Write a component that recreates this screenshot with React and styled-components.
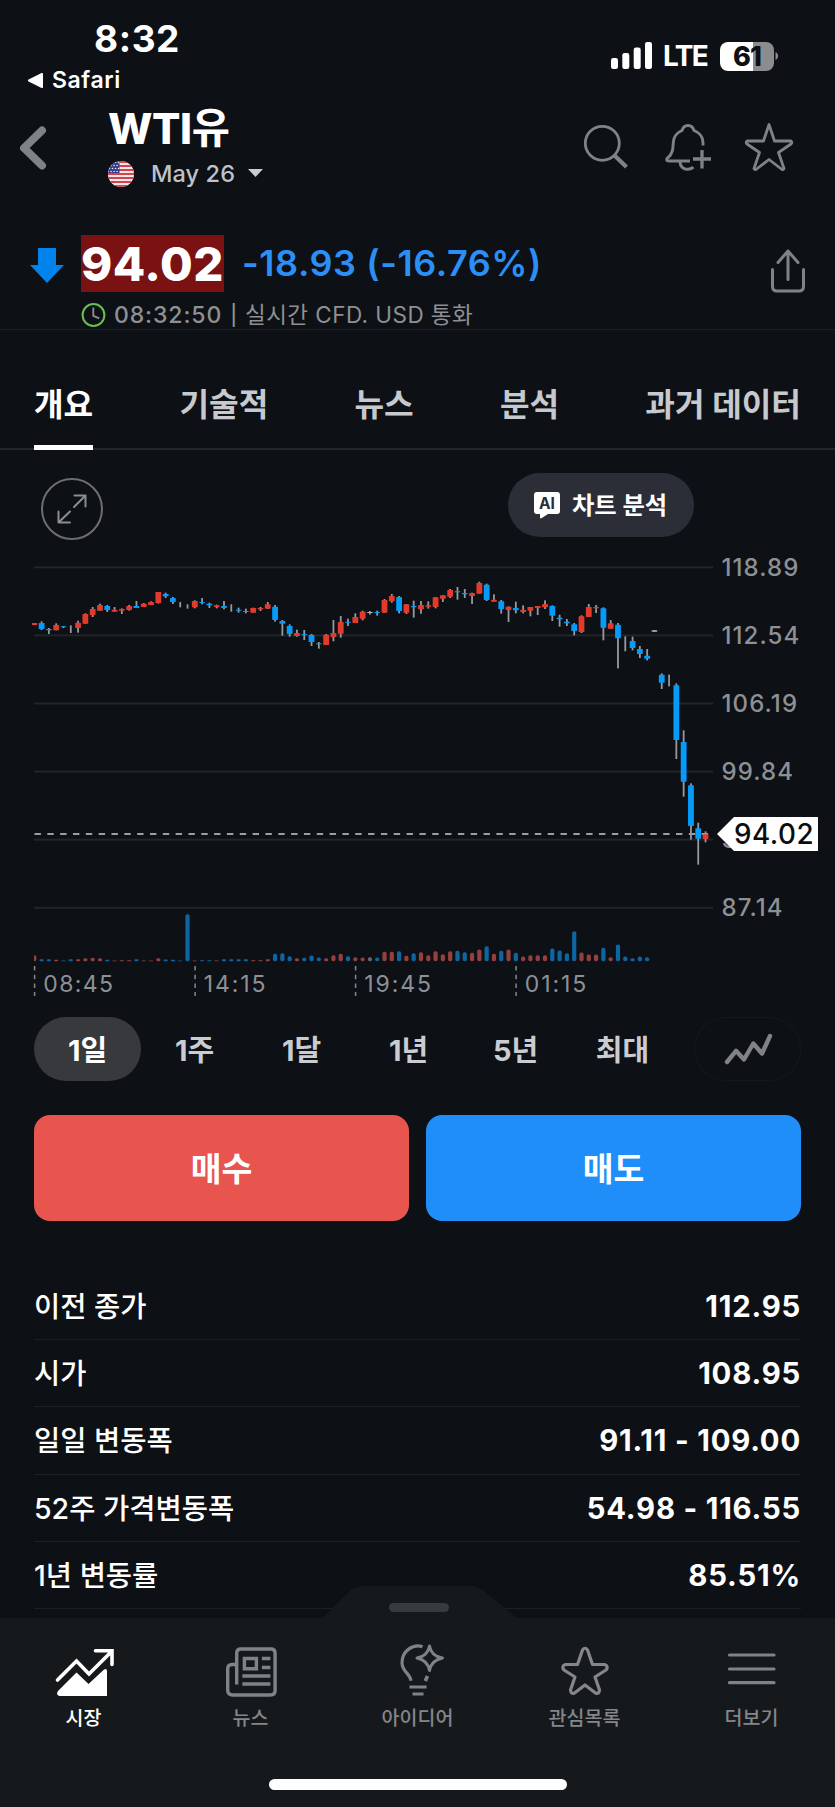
import React from "react";
import styled, { createGlobalStyle } from "styled-components";

const GlobalStyle = createGlobalStyle`
  * { box-sizing: border-box; }
  body {
    margin: 0;
    background: #0d1015;
    color: #fff;
    font-family: Inter, "Noto Sans CJK KR", sans-serif;
  }
  svg { display: block; flex: none; overflow: visible; }
  button {
    font: inherit;
    color: inherit;
    background: none;
    border: 0;
    padding: 0;
  }
`;

const Screen = styled.div`
  width: 835px;
  height: 1807px;
  display: flex;
  flex-direction: column;
  overflow: hidden;
  background: #0d1015;
`;

const Label = styled.span`
  display: block;
  white-space: pre;
  font-size: ${(p) => p.$size}px;
  font-weight: ${(p) => p.$weight || 400};
  letter-spacing: ${(p) => p.$track || 0}px;
  color: ${(p) => p.$color || "inherit"};
`;

/* Status bar */
const StatusBar = styled.header`
  height: 94px;
  flex: none;
  display: flex;
  justify-content: space-between;
  padding: 20px 56px 0 27px;
`;
const StatusLeft = styled.div`
  display: flex;
  flex-direction: column;
`;
const Clock = styled.div`
  line-height: 37px;
  padding-left: 67px;
`;
const BackToApp = styled.div`
  display: flex;
  align-items: center;
  gap: 8px;
  margin-top: 8px;
  line-height: 30px;
`;
const StatusRight = styled.div`
  display: flex;
  align-items: center;
  height: 72px;
  line-height: 30px;
`;
const Carrier = styled.div`
  width: 67px;
  padding-left: 10px;
`;
const Battery = styled.div`
  width: 54px;
  height: 29px;
  border-radius: 8px;
  background: linear-gradient(90deg, #fff 61%, #8b8c8e 61%);
  text-align: center;
  line-height: 29px;
  color: #0d1015;
`;

/* Title bar */
const TitleBar = styled.div`
  height: 117px;
  flex: none;
  display: flex;
  padding-left: 19px;
  padding-right: 41px;
`;
const TitleBlock = styled.div`
  display: flex;
  flex-direction: column;
  padding: 12px 0 0 61px;
  flex: 1;
`;
const TitleLine = styled.div`
  display: flex;
  line-height: 45px;
`;
const Contract = styled.div`
  display: flex;
  align-items: center;
  margin-top: 7px;
  line-height: 31px;
`;
const ContractName = styled.div`
  width: 97px;
  margin: 0 0 0 17px;
`;
const TitleActions = styled.div`
  display: flex;
  gap: 32px;
  padding-top: 28px;
`;
const BackButton = styled.button`
  align-self: flex-start;
  margin-top: 31px;
`;

/* Quote */
const Quote = styled.section`
  height: 119px;
  flex: none;
  display: flex;
  padding: 24px 29px 0 30px;
  border-bottom: 1px solid #1c1f24;
`;
const QuoteBody = styled.div`
  flex: 1;
  padding-left: 17px;
`;
const QuoteLine = styled.div`
  display: flex;
  align-items: center;
  line-height: 57px;
  height: 57px;
`;
const Price = styled.div`
  width: 143px;
  flex: none;
  background: #7a1113;
  text-align: center;
  margin-right: 18px;
`;
const QuoteMeta = styled.div`
  display: flex;
  align-items: center;
  gap: 8px;
  margin-top: 9px;
  line-height: 28px;
`;
const ShareButton = styled.button`
  align-self: flex-start;
  margin-top: 13px;
`;

/* Tabs */
const Tabs = styled.nav`
  height: 120px;
  flex: none;
  display: flex;
  justify-content: space-between;
  padding: 0 34px;
  border-bottom: 2px solid #222529;
`;
const Tab = styled.div`
  height: 120px;
  padding-top: 51px;
  line-height: 47px;
  color: ${(p) => (p.$active ? "#fff" : "#c6c9ce")};
  border-bottom: 5px solid ${(p) => (p.$active ? "#fff" : "transparent")};
`;

/* Chart */
const ChartTools = styled.div`
  height: 100px;
  flex: none;
  display: flex;
  justify-content: space-between;
  align-items: flex-start;
  padding: 23px 141px 0 41px;
`;
const ExpandButton = styled.button`
  width: 62px;
  height: 62px;
  margin-top: 5px;
  border: 2px solid #6c6e71;
  border-radius: 50%;
  display: grid;
  place-items: center;
`;
const AnalysisButton = styled.button`
  width: 186px;
  height: 64px;
  border-radius: 32px;
  background: #2c2e37;
  display: flex;
  align-items: center;
  padding-left: 26px;
  gap: 12px;
  line-height: 62px;
`;
const ChartText = styled.text`
  font-family: Inter, sans-serif;
  font-size: ${(p) => p.$size || 24}px;
  font-weight: ${(p) => p.$weight || 500};
  letter-spacing: ${(p) => p.$track || 0}px;
  fill: ${(p) => p.$fill || "#8d9094"};
`;

/* Periods */
const Periods = styled.div`
  display: flex;
  flex: none;
  margin: 14px 34px 0;
`;
const Period = styled.button`
  width: 107px;
  height: 64px;
  padding-top: ${(p) => (p.$outlined ? 0 : 3)}px;
  margin-left: ${(p) => (p.$outlined ? "auto" : 0)};
  display: flex;
  justify-content: center;
  align-items: center;
  border-radius: 32px;
  line-height: 61px;
  color: ${(p) => (p.$active ? "#fff" : "#c9ccd1")};
  background: ${(p) => (p.$active ? "#38393d" : "transparent")};
  box-shadow: inset 0 0 0 1px ${(p) => (p.$outlined ? "#15191d" : "transparent")};
`;

/* Trade buttons */
const TradeRow = styled.div`
  display: flex;
  flex: none;
  gap: 17px;
  margin: 34px 34px 0;
`;
const TradeButton = styled.button`
  flex: 1;
  height: 106px;
  border-radius: 16px;
  background: ${(p) => p.$bg};
  line-height: 104px;
  padding-top: 2px;
`;

/* Statistics */
const Stats = styled.dl`
  margin: 52px 34px 0;
  height: 345px;
  flex: none;
  overflow: hidden;
`;
const StatRow = styled.div`
  height: 67.2px;
  display: flex;
  justify-content: space-between;
  line-height: 67px;
  border-bottom: 1px solid #1c1f23;
  dt, dd { margin: 0; }
`;

/* Bottom navigation */
const BottomNav = styled.footer`
  position: relative;
  height: 189px;
  flex: none;
  background: #16191c;
`;
const SheetHandle = styled.svg`
  position: absolute;
  left: 322px;
  top: -32px;
`;
const NavItems = styled.div`
  display: flex;
`;
const NavItem = styled.div`
  flex: 1;
  display: flex;
  flex-direction: column;
  align-items: center;
  padding-top: 27px;
  color: ${(p) => (p.$active ? "#fff" : "#84868a")};
  line-height: 30px;
`;
const NavGlyph = styled.div`
  height: 58px;
`;
const HomeIndicator = styled.div`
  width: 298px;
  height: 11px;
  border-radius: 6px;
  background: #fff;
  margin: 46px auto 0;
`;

const GREY = "#808386";

const TriangleLeft = () => (
  <svg width="17" height="17" viewBox="0 0 17 17">
    <path d="M15 2 2 8.500 15 15Z" fill="#fff" stroke="#fff" strokeWidth="2" strokeLinejoin="round" />
  </svg>
);

const Signal = () => (
  <svg width="42" height="28" viewBox="0 0 42 28" fill="#fff">
    <rect x="0" y="16" width="7" height="11" rx="2.200" />
    <rect x="11.300" y="11" width="7" height="16" rx="2.200" />
    <rect x="22.700" y="5.500" width="7" height="21.500" rx="2.200" />
    <rect x="34" y="0" width="7" height="27" rx="2.200" />
  </svg>
);

const BatteryCap = () => (
  <svg width="5" height="10" viewBox="0 0 5 10">
    <path d="M1.500 1C5 2.500 5 7.500 1.500 9Z" fill="#8b8c8e" />
  </svg>
);

const ChevronBack = () => (
  <svg width="28" height="46" viewBox="0 0 28 46" fill="none">
    <path d="M23 5.500 5 23 23 40.500" stroke={GREY} strokeWidth="8" strokeLinecap="round" strokeLinejoin="round" />
  </svg>
);

const UsFlag = () => (
  <svg width="26" height="26" viewBox="0 0 26 26">
    <defs>
      <clipPath id="flag-round"><circle cx="13" cy="13" r="13" /></clipPath>
    </defs>
    <g clipPath="url(#flag-round)">
      <rect width="26" height="26" fill="#f6e6e8" />
      {[0, 1, 2, 3, 4, 5, 6].map((i) => (
        <rect key={i} y={i * 4} width="26" height="2" fill="#d3424f" />
      ))}
      <rect width="11.500" height="12" fill="#343c86" />
      {[2, 5, 8, 11].map((y, r) =>
        [1.5, 4.5, 7.5, 10.5].map((x) => (
          <circle key={`${x}-${y}`} cx={x - (r % 2) * 1.4} cy={y - 0.5} r="0.800" fill="#e9e9f4" />
        ))
      )}
    </g>
  </svg>
);

const CaretDown = () => (
  <svg width="15" height="8" viewBox="0 0 15 8">
    <path d="M0 0H15L7.500 8Z" fill="#c9ccd1" transform="translate(0 -1)" />
  </svg>
);

const SearchIcon = () => (
  <svg width="48" height="52" viewBox="0 0 48 52" fill="none" stroke={GREY}>
    <circle cx="17.300" cy="21.300" r="17" strokeWidth="2.800" />
    <path d="M29.500 33.500 41.500 45" strokeWidth="4.200" />
  </svg>
);

const BellPlusIcon = () => (
  <svg width="48" height="52" viewBox="0 0 48 52" fill="none" stroke={GREY} strokeWidth="2.900" strokeLinecap="butt">
    <path d="M25 39H4.500C1 39 1 37 3 35.500C8 31.500 8 26 8.300 20.500C8.600 14.500 12 10.500 17 8.500C18 4.800 20 3.500 23 3.500C26 3.500 28 4.800 29 8.500C34.500 10.500 37.800 14.500 38 20.500V23.500" strokeLinejoin="round" />
    <path d="M15 40C15 44.500 18.500 47.300 22.500 47.200C25 47.200 27 46.500 28.300 45" />
    <path d="M37 28V46.500M28 37H46" strokeWidth="3.300" />
  </svg>
);

const StarIcon = ({ size, path, width }) => (
  <svg width={size} height="52" viewBox={`0 0 ${size} 52`} fill="none">
    <path d={path} stroke="currentColor" strokeWidth={width} strokeLinejoin="round" />
  </svg>
);

const DownArrow = () => (
  <svg width="34" height="58" viewBox="0 0 34 58">
    <path d="M8 13H26V30H34L17 48 0 30H8Z" fill="#0183eb" />
  </svg>
);

const ClockIcon = () => (
  <svg width="25" height="24" viewBox="0 0 25 24" fill="none">
    <circle cx="12.500" cy="12" r="10.900" stroke="#69bf51" strokeWidth="2" />
    <path d="M12.300 4.500V12.800L18.300 15.300" stroke="#8e9093" strokeWidth="1.800" />
  </svg>
);

const ShareIcon = () => (
  <svg width="36" height="46" viewBox="0 0 36 46" fill="none" stroke={GREY} strokeWidth="3" strokeLinecap="round" strokeLinejoin="round">
    <path d="M18 31.500V3M8 14.500 18 3 28 14.500" />
    <path d="M2.500 21.500V38.500C2.500 41.500 4 43 7 43H29C32 43 33.500 41.500 33.500 38.500V21.500" />
  </svg>
);

const ExpandIcon = () => (
  <svg width="30" height="30" viewBox="0 0 30 30" fill="none" stroke="#8b8d90" strokeWidth="2" strokeLinecap="round" strokeLinejoin="round">
    <path d="M17 13 28.500 1.500M17.500 1.500H28.500V12.500" />
    <path d="M13 17.500 1.500 28.500M1.500 17.500V28.500H13" />
  </svg>
);

const AiIconBox = styled.span`
  position: relative;
  width: 26px;
  height: 27px;
  display: block;
`;
const AiText = styled.span`
  position: absolute;
  left: 0;
  top: 0;
  width: 26px;
  text-align: center;
  font-size: 15.5px;
  line-height: 23px;
  font-weight: 700;
  color: #2c2e37;
`;
const AiIcon = () => (
  <AiIconBox>
    <svg width="26" height="27" viewBox="0 0 26 27">
      <path d="M3 0H23Q26 0 26 3V19Q26 22 23 22H14L7 26.500Q6 26.500 6 25V22H3Q0 22 0 19V3Q0 0 3 0Z" fill="#fff" />
    </svg>
    <AiText>AI</AiText>
  </AiIconBox>
);

const ZigzagIcon = () => (
  <svg width="48" height="32" viewBox="0 0 48 32" fill="none">
    <path d="M3 29 12 17.800 20 26.500 29.300 10.500 38 20.500 46 3" stroke="#808285" strokeWidth="4.400" strokeLinecap="round" strokeLinejoin="round" />
  </svg>
);

/* Each candle: colour, wick top, body top, body bottom, wick bottom (thirds of a pixel) */
const CANDLES = [
  "r 219 219 225 225", "b 214 219 237 240", "b 234 237 241 252", "r 220 225 241 241", "b 228 229 232 234",
  "w 226 0 0 249", "r 212 218 234 248", "r 190 192 221 221", "r 171 177 195 201", "r 161 165 182 182",
  "b 165 168 180 186", "r 171 179 185 185", "r 175 177 182 192", "r 165 168 180 182", "b 153 168 174 174",
  "r 159 161 171 171", "r 154 156 165 165", "r 126 126 159 161", "b 128 132 139 144", "b 141 144 156 162",
  "w 156 0 0 172", "w 163 0 0 176", "r 151 153 172 175", "b 144 156 159 163", "b 158 161 166 174",
  "r 164 166 171 175", "b 153 168 174 178", "w 163 0 0 185", "b 173 179 182 188", "b 176 183 186 190",
  "r 173 174 188 188", "r 171 174 178 183", "r 156 163 176 177", "b 165 170 210 215", "b 210 213 221 257",
  "b 223 228 252 260", "r 239 249 258 260", "b 240 252 255 270", "b 252 255 276 288", "b 276 280 283 296",
  "r 252 254 285 285", "r 210 249 261 274", "r 198 216 251 263", "b 206 215 218 228", "r 190 201 219 219",
  "r 182 185 206 211", "g 183 186 189 194", "b 182 186 189 197", "r 147 150 188 188", "r 132 138 154 158",
  "b 138 141 183 190", "r 162 163 188 192", "b 152 168 172 203", "r 153 165 178 191", "r 154 166 170 176",
  "r 141 142 171 175", "r 136 136 146 156", "r 117 120 140 144", "b 111 124 127 149", "b 117 129 133 144",
  "r 128 129 138 162", "r 95 99 131 131", "b 101 104 150 153", "r 133 149 155 155", "b 150 154 177 191",
  "r 169 170 180 216", "b 155 174 181 190", "r 166 179 186 190", "r 171 171 182 199", "r 168 168 174 195",
  "r 151 162 172 177", "b 166 168 197 213", "b 194 203 208 230", "b 207 215 220 228", "b 219 223 243 256",
  "r 196 199 246 249", "r 162 171 201 201", "r 165 171 175 189", "b 172 175 233 271", "r 210 220 236 236",
  "b 219 224 265 355", "w 259 0 0 304", "b 260 273 294 301", "b 288 297 312 324", "b 297 317 326 331",
  "g 241 241 245 245", "b 370 374 398 417", "w 374 0 0 409", "b 400 406 570 627", "b 541 576 695 740",
  "b 700 706 828 869", "b 818 835 866 944", "r 844 853 867 877",
].map((s) => {
  const [c, ...v] = s.split(" ");
  return [c, ...v.map((n) => Number(n) / 3)];
});

const VOLUMES = (
  "r18 b6 b6 r4 b2 b6 r6 r9 r10 r9 b4 r2 r3 r3 b6 r2 r2 r9 b5 b4 b2 b141 r2 b3 b3 r2 b6 b6 b6 b6 r3 r3 r6 " +
  "b22 b24 b15 r9 b10 b17 b11 r9 r18 r22 b15 r12 r11 g12 b11 r28 r28 b30 r16 b24 r27 r18 r30 r21 r30 b31 b27 " +
  "r25 r35 b45 r22 b31 r35 b25 r14 r18 r18 r18 b38 b32 b24 b90 r26 r20 r20 b40 r12 b50 b14 b9 b14 b12"
).split(" ").map((s) => [s[0], Number(s.slice(1)) / 3]);

const CANDLE_COLORS = { r: "#e23a2c", b: "#059bfb", g: "#b3b5b8" };
const VOLUME_COLORS = { r: "#94403e", b: "#0d66a2", g: "#66686b" };
const xAt = (i) => 34.3 + i * 7.296;

const PRICE_AXIS = ["118.89", "112.54", "106.19", "99.84", "93.49", "87.14"];
const TIME_AXIS = ["08:45", "14:15", "19:45", "01:15"];

const Chart = () => (
  <svg width="835" height="453" viewBox="0 0 835 453">
    <defs>
      <clipPath id="plot"><rect x="32" y="0" width="700" height="453" /></clipPath>
      <clipPath id="volume"><rect x="34" y="340" width="700" height="80" /></clipPath>
    </defs>
    {PRICE_AXIS.map((p, i) => (
      <g key={p}>
        <rect x="34" y={16.3 + i * 68.1} width="679" height="2" fill="#222529" />
        <ChartText x="721.500" y={25.6 + i * 68.1} $track={1.1}>{p}</ChartText>
      </g>
    ))}
    <path d="M34.500 284H713" stroke="#9c9ea1" strokeWidth="2" strokeDasharray="6.400 6.430" />
    <g clipPath="url(#plot)">
      {CANDLES.map(([c, wt, bt, bb, wb], i) => (
        <g key={i}>
          <rect x={xAt(i) - 0.9} y={wt} width="1.800" height={wb - wt} fill="#97999c" />
          {c !== "w" && (
            <rect x={xAt(i) - 2.9} y={bt} width="5.800" height={bb - bt} rx="0.400" fill={CANDLE_COLORS[c]} />
          )}
        </g>
      ))}
    </g>
    <g clipPath="url(#volume)">
      {VOLUMES.map(([c, h], i) => (
        <rect key={i} x={xAt(i) - 2.1} y={411.2 - h} width="4.200" height={h} rx={Math.min(1.8, h / 2)} fill={VOLUME_COLORS[c]} />
      ))}
    </g>
    {TIME_AXIS.map((t, i) => (
      <g key={t}>
        <path d={`M${34.6 + i * 160.5} 416V446`} stroke="#85878a" strokeWidth="1.500" strokeDasharray="4.500 4.200" />
        <ChartText x={43.3 + i * 160.5} y="442" $size={23} $weight={400} $track={i ? 1.9 : 1.4}>{t}</ChartText>
      </g>
    ))}
    <path d="M717 284 734 267H818V301H734Z" fill="#fff" />
    <ChartText x="734" y="294" $size={27.8} $track={0.5} $fill="#0b0c0e">94.02</ChartText>
  </svg>
);

const MarketIcon = () => (
  <svg width="60" height="50" viewBox="0 0 60 50">
    <path d="M3.500 35 22.500 16 35 29 56 8M41.500 5.800H58V19.500" fill="none" stroke="#fff" strokeWidth="3.600" strokeLinecap="round" />
    <path d="M22.500 27.500 34.500 39 49.500 25Q52.700 22.500 53 26V51H5.500Q1.500 50 4 46Z" fill="#fff" />
  </svg>
);

const NewsIcon = () => (
  <svg width="51" height="52" viewBox="1.3 0 51 52" fill="none" stroke={GREY} strokeWidth="3.400">
    <path d="M13 39.500V8.200Q13 4 17.200 4H47.200Q51.400 4 51.400 8.200V45.500Q51.400 50 46.700 50H9Q4 50 4 45V24Q4 19.500 8.500 19.500H12" />
    <path d="M20.700 13.500H32.700V23.700H20.700ZM38.200 13.500H46.700M38.200 22.500H46.700M18.700 31H46.700M18.700 39H46.700" />
  </svg>
);

const IdeaIcon = () => (
  <svg width="54" height="54" viewBox="0 0 54 54" fill="none" stroke={GREY} strokeWidth="3.200">
    <path d="M31.500 1.700C22 -1.500 10.800 6 11 18C11.200 27 19 28 20 35.700" />
    <path d="M34.300 36 36.500 31" strokeWidth="3.600" />
    <path d="M18.500 42H35.500M21.500 49H32.500" />
    <path d="M38.500 1Q40.500 11.500 51.500 13Q40.500 15 38.500 25.500Q36.500 15 26 13Q36.500 11.500 38.500 1Z" strokeWidth="3" strokeLinejoin="round" />
  </svg>
);

const MenuIcon = () => (
  <svg width="50" height="50" viewBox="0 0 50 50" stroke={GREY} strokeWidth="3.200" strokeLinecap="round">
    <path d="M2.500 10H47M2.500 24H47M2.500 37.700H47" />
  </svg>
);

const HEADER_STAR = "M24 2.500 29.500 19H46Q47.500 20.500 46 22L33.500 30.500 39 46.500Q38.500 48 37 47.500L24 37.500 11 47.500Q9.500 48 9 46.500L14.500 30.500 2 22Q0.500 20.500 2 19H18.500Z";
const NAV_STAR = "M22.500 5Q25 1.500 27.500 5L32.500 19.500H44.500Q49 21 46 25L35 32 39.500 45Q39 49.500 35.500 48L25 40 14.500 48Q11 49.500 10.500 45L15 32 4 25Q1 21 5.500 19.500H17.500Z";

const TABS = ["개요", "기술적", "뉴스", "분석", "과거 데이터"];
const PERIODS = ["1일", "1주", "1달", "1년", "5년", "최대"];
const STATS = [
  ["이전 종가", "112.95"],
  ["시가", "108.95"],
  ["일일 변동폭", "91.11 - 109.00"],
  ["52주 가격변동폭", "54.98 - 116.55"],
  ["1년 변동률", "85.51%"],
];
const NAV = [
  ["시장", <MarketIcon />],
  ["뉴스", <NewsIcon />],
  ["아이디어", <IdeaIcon />],
  ["관심목록", <StarIcon size={50} path={NAV_STAR} width={3.2} />],
  ["더보기", <MenuIcon />],
];

export default function App() {
  return (
    <Screen>
      <GlobalStyle />
      <StatusBar>
        <StatusLeft>
          <Clock><Label $size={37} $weight={700} $track={0.6}>8:32</Label></Clock>
          <BackToApp>
            <TriangleLeft />
            <Label $size={23} $weight={600} $track={0.6}>Safari</Label>
          </BackToApp>
        </StatusLeft>
        <StatusRight>
          <Signal />
          <Carrier><Label $size={28} $weight={700} $track={-1.6}>LTE</Label></Carrier>
          <Battery><Label $size={27} $weight={800} $track={-1}>61</Label></Battery>
          <BatteryCap />
        </StatusRight>
      </StatusBar>

      <TitleBar>
        <BackButton><ChevronBack /></BackButton>
        <TitleBlock>
          <TitleLine>
            <Label $size={42} $weight={800} $track={-0.4}>WTI</Label>
            <Label $size={41.5} $weight={700}>유</Label>
          </TitleLine>
          <Contract>
            <UsFlag />
            <ContractName><Label $size={23.5} $weight={500} $track={0.1} $color="#bfc2c7">May 26</Label></ContractName>
            <CaretDown />
          </Contract>
        </TitleBlock>
        <TitleActions>
          <SearchIcon />
          <BellPlusIcon />
          <Label $color={GREY}><StarIcon size={49} path={HEADER_STAR} width={2.8} /></Label>
        </TitleActions>
      </TitleBar>

      <Quote>
        <DownArrow />
        <QuoteBody>
          <QuoteLine>
            <Price><Label $size={47.3} $weight={800} $track={0.5}>94.02</Label></Price>
            <Label $size={36} $weight={600} $track={0.55} $color="#2b8ff5">-18.93 (-16.76%)</Label>
          </QuoteLine>
          <QuoteMeta>
            <ClockIcon />
            <Label $size={23} $weight={500} $track={0.9} $color="#8e9093">08:32:50</Label>
            <Label $size={20} $weight={500} $color="#8e9093">|</Label>
            <Label $size={22.5} $track={0.45} $color="#8e9093">실시간 CFD. USD 통화</Label>
          </QuoteMeta>
        </QuoteBody>
        <ShareButton><ShareIcon /></ShareButton>
      </Quote>

      <Tabs>
        {TABS.map((t, i) => (
          <Tab key={t} $active={i === 0}><Label $size={32.2} $weight={700}>{t}</Label></Tab>
        ))}
      </Tabs>

      <ChartTools>
        <ExpandButton><ExpandIcon /></ExpandButton>
        <AnalysisButton>
          <AiIcon />
          <Label $size={24.3} $weight={700}>차트 분석</Label>
        </AnalysisButton>
      </ChartTools>
      <Chart />

      <Periods>
        {PERIODS.map((p, i) => (
          <Period key={p} $active={i === 0}><Label $size={29} $weight={700}>{p}</Label></Period>
        ))}
        <Period $outlined><ZigzagIcon /></Period>
      </Periods>

      <TradeRow>
        <TradeButton $bg="#e8544e"><Label $size={33.5} $weight={700}>매수</Label></TradeButton>
        <TradeButton $bg="#1f8ef9"><Label $size={33.5} $weight={700}>매도</Label></TradeButton>
      </TradeRow>

      <Stats>
        {STATS.map(([name, value]) => (
          <StatRow key={name}>
            <dt><Label $size={28.5} $weight={500}>{name}</Label></dt>
            <dd><Label $size={29.3} $weight={700} $track={0.8}>{value}</Label></dd>
          </StatRow>
        ))}
      </Stats>

      <BottomNav>
        <SheetHandle width="196" height="33" viewBox="0 0 196 33">
          <path d="M0 33V32L28 5Q33 0 42 0H148Q156 0 162 5L195 32V33Z" fill="#16191c" />
          <rect x="67" y="17" width="60" height="9" rx="4.500" fill="#383b3e" />
        </SheetHandle>
        <NavItems>
          {NAV.map(([name, icon], i) => (
            <NavItem key={name} $active={i === 0}>
              <NavGlyph>{icon}</NavGlyph>
              <Label $size={19.5} $weight={500}>{name}</Label>
            </NavItem>
          ))}
        </NavItems>
        <HomeIndicator />
      </BottomNav>
    </Screen>
  );
}
